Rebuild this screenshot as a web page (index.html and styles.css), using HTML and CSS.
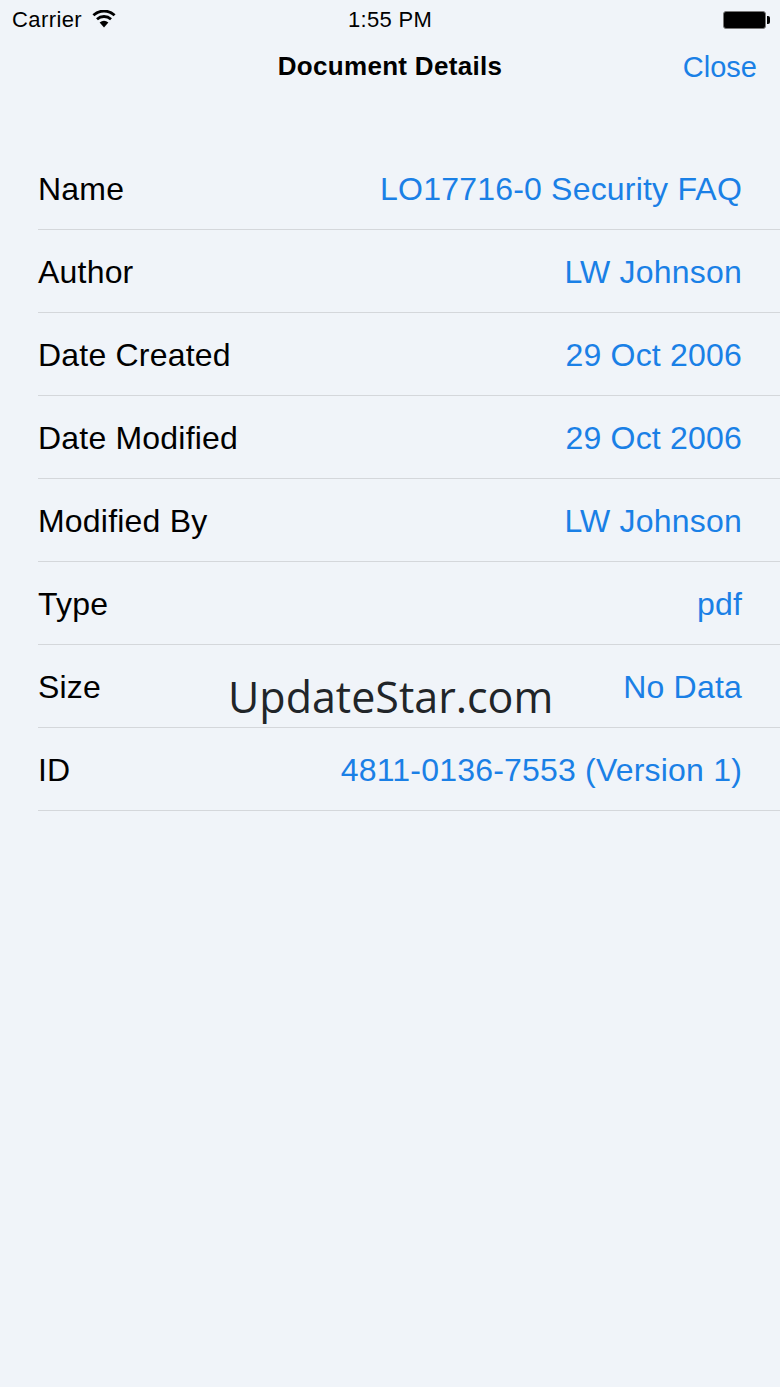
FILE: index.html
```html
<!DOCTYPE html>
<html lang="en">
<head>
  <meta charset="UTF-8" />
  <title>Document Details</title>
  <link rel="stylesheet" href="styles.css">
</head>
<body>
  <div class="statusbar">
    <div class="status-left">
      <span class="carrier">Carrier</span>
      <svg class="wifi" width="24" height="18" viewBox="0 0 24 18">
        <path d="M12 17.5 L7.6 12.6 A7 7 0 0 1 16.4 12.6 Z" fill="#000"/>
        <path d="M5 9.2 A10.4 10.4 0 0 1 19 9.2" fill="none" stroke="#000" stroke-width="2.8"/>
        <path d="M1.4 5.2 A15.6 15.6 0 0 1 22.6 5.2" fill="none" stroke="#000" stroke-width="2.8"/>
      </svg>
    </div>
    <div class="status-time">1:55 PM</div>
    <div class="battery"></div>
  </div>

  <div class="navbar">
    <h1>Document Details</h1>
    <a class="close">Close</a>
  </div>

  <div class="details">
    <div class="row"><span class="label">Name</span><span class="value">LO17716-0 Security FAQ</span></div>
    <div class="row"><span class="label">Author</span><span class="value">LW Johnson</span></div>
    <div class="row"><span class="label">Date Created</span><span class="value">29 Oct 2006</span></div>
    <div class="row"><span class="label">Date Modified</span><span class="value">29 Oct 2006</span></div>
    <div class="row"><span class="label">Modified By</span><span class="value">LW Johnson</span></div>
    <div class="row"><span class="label">Type</span><span class="value">pdf</span></div>
    <div class="row"><span class="label">Size</span><span class="value">No Data</span></div>
    <div class="row"><span class="label">ID</span><span class="value">4811-0136-7553 (Version 1)</span></div>
    <div class="watermark">UpdateStar.com</div>
  </div>
</body>
</html>
```

FILE: styles.css
```css
html, body {
  margin: 0;
  padding: 0;
}

body {
  width: 780px;
  height: 1387px;
  overflow: hidden;
  background: #f0f4f9;
  color: #000;
  font-family: "Liberation Sans", Arial, sans-serif;
}

.statusbar {
  height: 40px;
  display: flex;
  align-items: center;
  justify-content: space-between;
  padding: 0 12px;
  position: relative;
  font-size: 22px;
}

.status-left {
  display: flex;
  align-items: center;
  gap: 10px;
}

.carrier {
  letter-spacing: 0.4px;
}

.wifi {
  margin-top: -3px;
}

.status-time {
  position: absolute;
  left: 0;
  right: 0;
  text-align: center;
  letter-spacing: 0.3px;
}

.battery {
  width: 43px;
  height: 18px;
  box-sizing: border-box;
  border: 1px solid #777;
  border-radius: 3px;
  background: #000;
  position: relative;
  margin-right: 2px;
}

.battery::after {
  content: "";
  position: absolute;
  right: -5px;
  top: 4px;
  width: 3px;
  height: 8px;
  background: #000;
  border-radius: 0 2px 2px 0;
}

.navbar {
  height: 52px;
  display: flex;
  align-items: center;
  justify-content: center;
  position: relative;
}

.navbar h1 {
  margin: 0;
  font-size: 26px;
  font-weight: bold;
  letter-spacing: 0.3px;
}

.close {
  position: absolute;
  right: 23px;
  top: 11px;
  font-size: 29px;
  color: #1a80e6;
}

.details {
  margin-top: 55px;
  margin-left: 38px;
  position: relative;
}

.row {
  height: 82px;
  border-bottom: 1px solid #d4d7db;
  display: flex;
  align-items: center;
  justify-content: space-between;
  padding-right: 38px;
  font-size: 32px;
  letter-spacing: 0.2px;
}

.row span {
  position: relative;
  top: 1px;
}

.label {
  color: #000;
}

.value {
  color: #1a80e6;
}

.watermark {
  position: absolute;
  left: 188px;
  top: 525px;
  font-family: "Open Sans", sans-serif;
  font-size: 43px;
  color: #212529;
  background: #f0f4f9;
  padding: 0 2px;
  line-height: 50px;
}
```
